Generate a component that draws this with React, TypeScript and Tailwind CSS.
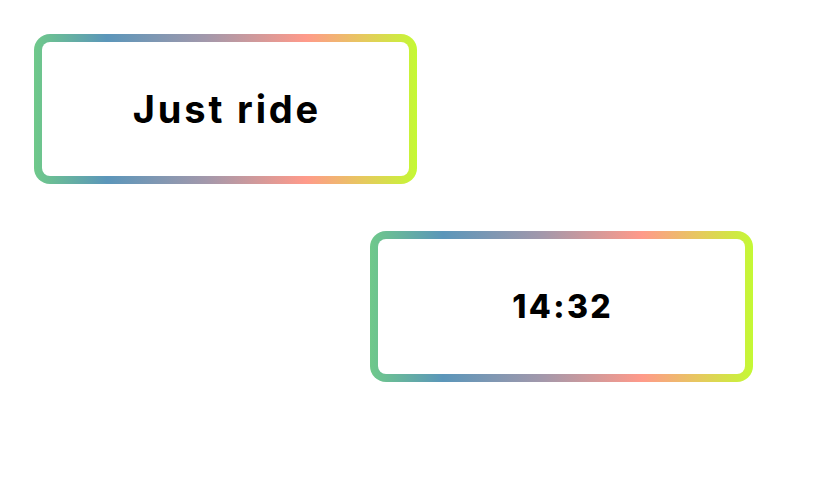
export default function App() {
  const grad =
    "bg-[linear-gradient(to_right,#6fc98a_0%,#5b96ba_19%,#a398ab_45%,#ff9a8a_71%,#e6c95e_86%,#c4f934_100%)]";
  return (
    <div className="w-[828px] h-[484px] bg-white flex flex-col pt-[34px] pl-[34px]" style={{ fontFamily: "Inter, 'Liberation Sans', sans-serif" }}>
      <div className={`w-[383px] h-[150px] rounded-[16px] p-[8px] ${grad}`}>
        <div className="w-full h-full bg-white rounded-[8px] flex items-center justify-center">
          <span className="text-[38px] font-bold tracking-[0.075em] text-black leading-none pl-[0.075em]">Just ride</span>
        </div>
      </div>
      <div className={`w-[383px] h-[151px] rounded-[16px] p-[8px] ml-[336px] mt-[47px] ${grad}`}>
        <div className="w-full h-full bg-white rounded-[8px] flex items-center justify-center">
          <span className="text-[32px] font-extrabold tracking-[0.075em] text-black leading-none pl-[0.075em]">14:32</span>
        </div>
      </div>
    </div>
  );
}
